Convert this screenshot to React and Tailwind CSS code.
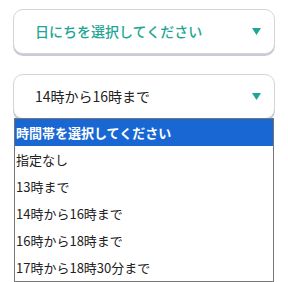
import React from 'react';

const options = [
  '時間帯を選択してください',
  '指定なし',
  '13時まで',
  '14時から16時まで',
  '16時から18時まで',
  '17時から18時30分まで',
];

const Caret = () => (
  <svg width="9" height="7" viewBox="0 0 9 7" className="shrink-0">
    <path d="M0 0 H9 L4.5 7 Z" fill="#1fa596" />
  </svg>
);

const SelectBox = ({ label, className }) => (
  <div
    className={`flex items-center justify-between h-[45px] pl-[21px] pr-[13px] bg-white rounded-[10px] border border-[#d4d4dc] shadow-[0_2px_0_#c9cad3] ${className}`}
  >
    <span>{label}</span>
    <Caret />
  </div>
);

export default function App() {
  return (
    <div
      className="relative w-[288px] h-[282px] bg-white overflow-hidden px-[13px] pt-[9px]"
      style={{ fontFamily: '"Noto Sans CJK JP", "Noto Sans", sans-serif' }}
    >
      <SelectBox
        label="日にちを選択してください"
        className="text-[14px] font-medium text-[#1fa596]"
      />
      <SelectBox
        label="14時から16時まで"
        className="mt-[20px] text-[14px] text-[#222]"
      />

      {/* open option list */}
      <div className="absolute left-[14px] top-[118px] w-[260px] bg-white border border-[#767676]">
        {options.map((opt, i) => (
          <div
            key={opt}
            className={`h-[27px] flex items-center pl-[1px] text-[13px] leading-none ${
              i === 0 ? 'bg-[#1967d2] text-white font-bold' : 'text-[#222]'
            }`}
          >
            {opt}
          </div>
        ))}
      </div>
    </div>
  );
}
